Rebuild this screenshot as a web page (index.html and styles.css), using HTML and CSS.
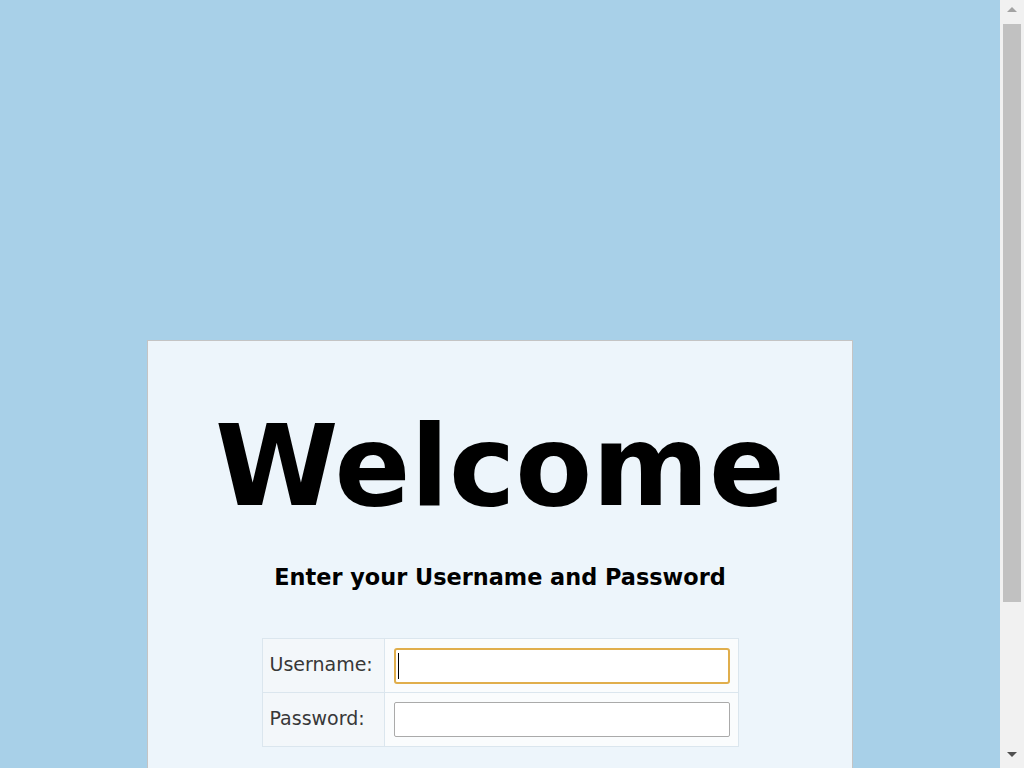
FILE: index.html
```html
<!DOCTYPE html>
<html>
<head>
<meta charset="utf-8">
<title>Login</title>
<link rel="stylesheet" href="styles.css">
</head>
<body>
<div class="page">
  <div class="card">
    <h1 class="title">Welcome</h1>
    <h2 class="subtitle">Enter your Username and Password</h2>
    <form class="login">
      <table class="fields">
        <tr>
          <td class="label">Username:</td>
          <td class="field"><span class="input-wrap"><input class="input focused" type="text"><span class="caret"></span></span></td>
        </tr>
        <tr>
          <td class="label">Password:</td>
          <td class="field"><span class="input-wrap"><input class="input" type="password"></span></td>
        </tr>
      </table>
    </form>
  </div>
</div>
<div class="scrollbar">
  <div class="arrow up"></div>
  <div class="thumb"></div>
  <div class="arrow down"></div>
</div>
</body>
</html>
```
FILE: styles.css
```css
html, body {
  margin: 0;
  padding: 0;
  background: #a8d0e8;
  font-family: "DejaVu Sans", sans-serif;
}
.page {
  padding-top: 340px;
  padding-bottom: 200px;
  padding-left: 147px;
}
.card {
  width: 704px;
  background: #edf5fb;
  border: 1px solid #c4c4c4;
  padding: 55px 0 80px;
  text-align: center;
}
.title {
  margin: 0;
  font-size: 112px;
  font-weight: bold;
  line-height: 140px;
  color: #000;
}
.subtitle {
  margin: 28px 0 0;
  font-size: 22.4px;
  line-height: 26px;
  font-weight: bold;
  color: #000;
}
.login {
  margin-top: 48px;
}
.fields {
  margin: 0 auto;
  border-collapse: collapse;
  border: 1px solid #dbe6ee;
  width: 477px;
}
.fields td {
  border: 1px solid #dbe6ee;
  height: 53px;
  padding: 0;
}
.fields td.label {
  height: 49px;
  background: #f3f7fa;
  color: #383838;
  font-size: 19px;
  text-align: left;
  padding: 0 0 4px 7px;
  width: 115px;
}
.fields td.field {
  background: #fafcfd;
  padding: 0 8px 0 9px;
}
.input-wrap {
  display: block;
  position: relative;
}
.input {
  display: block;
  box-sizing: border-box;
  width: 336px;
  height: 35px;
  border: 1px solid #aaa;
  border-radius: 2px;
  background: #fff;
  outline: none;
  font-size: 16px;
  padding: 0 4px;
}
.input.focused {
  height: 36px;
  border: 2px solid #e0ae4c;
  border-radius: 3px;
}
.caret {
  position: absolute;
  left: 4px;
  top: 5px;
  width: 1px;
  height: 26px;
  background: #000;
}
.scrollbar {
  position: fixed;
  top: 0;
  right: 0;
  width: 24px;
  height: 768px;
  background: #f1f1f1;
  display: flex;
  flex-direction: column;
  align-items: center;
}
.arrow {
  width: 0;
  height: 0;
  border-left: 5px solid transparent;
  border-right: 5px solid transparent;
}
.arrow.up {
  margin-top: 7px;
  border-bottom: 5px solid #a3a3a3;
}
.arrow.down {
  margin-top: auto;
  margin-bottom: 11px;
  border-top: 5px solid #505050;
}
.thumb {
  margin-top: 12px;
  width: 18px;
  height: 578px;
  background: #c1c1c1;
}
```
